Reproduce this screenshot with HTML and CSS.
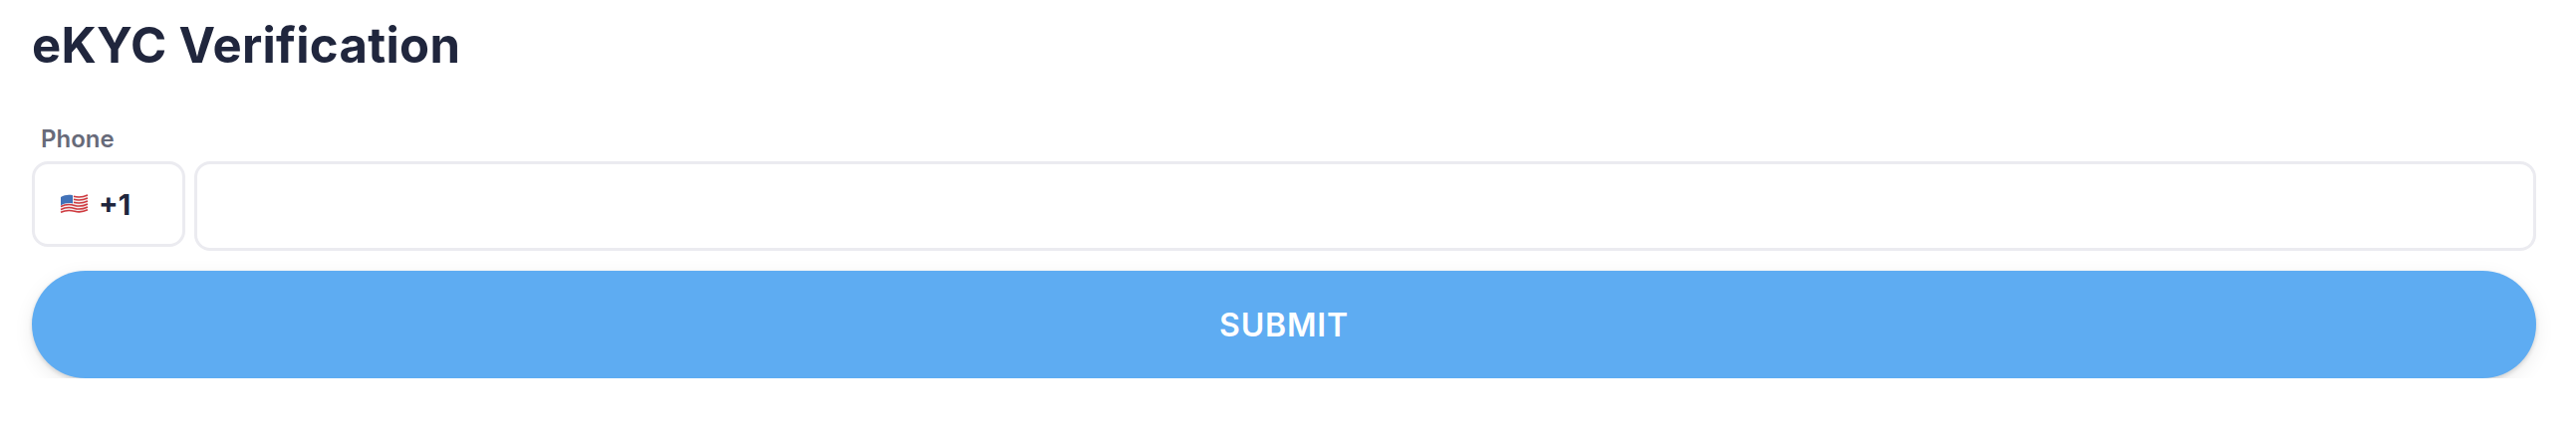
FILE: index.html
```html
<!DOCTYPE html>
<html lang="en">
<head>
    <meta charset="UTF-8">
    <meta name="viewport" content="width=device-width, initial-scale=1.0">
    <title>eKYC Verification</title>
    <link rel="stylesheet" href="styles.css">
</head>
<body>
    <div class="container">
        <h1>eKYC Verification</h1>
        <form id="ekycForm">
            <label for="phone">Phone</label>
            <div class="phone-row">
                <div class="country">
                    <svg class="flag" width="29" height="22" viewBox="0 0 29 22">
                        <path d="M1 4C6 1 10 1 14 2.500S23 3.500 28 1V17C23 20 19 20 15 18.500S6 17.500 1 20Z" fill="#f4f1f1"/>
                        <g fill="none" stroke="#cf3a3f" stroke-width="1.500">
                            <path d="M14 3.300C19 4.800 23 4.300 28 2"/>
                            <path d="M14 6.300C19 7.800 23 7.300 28 5"/>
                            <path d="M14 9.300C19 10.800 23 10.300 28 8"/>
                            <path d="M1 13.500C6 11 10 11 15 12.500S23 13.300 28 11"/>
                            <path d="M1 16.500C6 14 10 14 15 15.500S23 16.300 28 14"/>
                            <path d="M1 19.300C6 17 10 17 15 18.300S23 19.200 28 16.800"/>
                        </g>
                        <path d="M1 4C5 1.700 9 1.300 13 2.200V10.500C9 9.700 5 10 1 12.500Z" fill="#4272b8"/>
                    </svg>
                    <span>+1</span>
                </div>
                <input type="tel" id="phone">
            </div>
            <button type="button">SUBMIT</button>
        </form>
    </div>
</body>
</html>
```

FILE: styles.css
```css
body {
    font-family: Inter, "Liberation Sans", sans-serif;
    margin: 0;
    background-color: #fff;
    color: #20263d;
}
.container {
    padding: 16px 40px 0 32px;
}
h1 {
    font-size: 49px;
    line-height: 60px;
    font-weight: 700;
    letter-spacing: 0.3px;
    margin: 0 0 51px;
}
label {
    display: block;
    margin: 0 0 10px 9px;
    font-size: 24px;
    line-height: 25px;
    font-weight: 600;
    color: #676a79;
}
.phone-row {
    display: flex;
    align-items: flex-start;
    gap: 9px;
}
.country {
    box-sizing: border-box;
    flex: none;
    display: flex;
    align-items: center;
    gap: 10px;
    width: 154px;
    height: 86px;
    padding-left: 25px;
    border: 3px solid #ebebf0;
    border-radius: 16px;
    font-size: 29px;
    font-weight: 700;
}
.flag {
    flex: none;
}
input {
    box-sizing: border-box;
    flex: 1;
    height: 90px;
    border: 3px solid #ebebf0;
    border-radius: 16px;
    outline: none;
}
button {
    display: block;
    width: 100%;
    height: 108px;
    margin-top: 20px;
    background-color: #5eacf2;
    color: #fff;
    border: none;
    border-radius: 54px;
    font-family: inherit;
    font-size: 32px;
    font-weight: 600;
    letter-spacing: 0.8px;
    box-shadow: 0 2px 4px rgba(0, 0, 0, 0.14), 0 6px 20px rgba(0, 0, 0, 0.08);
}
```
